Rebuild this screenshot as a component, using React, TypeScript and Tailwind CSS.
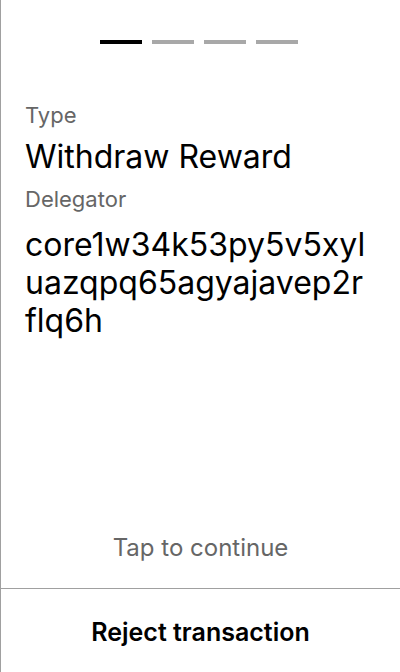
const ADDRESS = 'core1w34k53py5v5xyluazqpq65agyajavep2rflq6h';

export default function App() {
  const steps = [true, false, false, false];
  const lines = ADDRESS.match(/.{1,19}/g) || [];

  return (
    <div className="flex h-[672px] w-[400px] flex-col border-l border-[#a0a0a0] bg-white font-['Inter',sans-serif] text-black">
      <div className="flex justify-center gap-[10px] pt-[40px] pr-[3px]">
        {steps.map((active, i) => (
          <div key={i} className={active ? 'h-[4px] w-[42px] bg-black' : 'h-[4px] w-[42px] bg-[#a8a8a8]'} />
        ))}
      </div>

      <div className="px-[24px] pt-[57px]">
        <p className="text-[22px] leading-[28px] text-[#666]">Type</p>
        <p className="mt-[9px] text-[32px] leading-[38px]">Withdraw Reward</p>
        <p className="mt-[9px] text-[22px] leading-[28px] text-[#666]">Delegator</p>
        <p className="mt-[13px] text-[32px] leading-[38px]">
          {lines.map((line) => (
            <span key={line} className="block">{line}</span>
          ))}
        </p>
      </div>

      <div className="flex-1" />

      <p className="pb-[25px] text-center text-[24px] leading-[30px] text-[#666]">Tap to continue</p>

      <button className="h-[84px] border-t border-[#a0a0a0] pt-[4px] text-[25px] font-semibold">Reject transaction</button>
    </div>
  );
}
